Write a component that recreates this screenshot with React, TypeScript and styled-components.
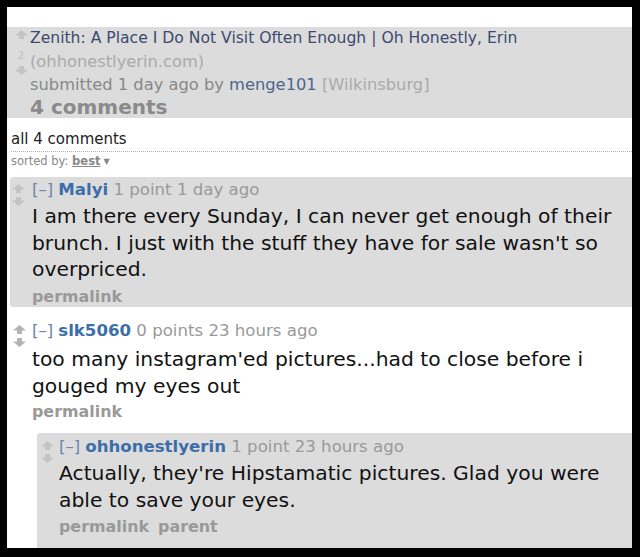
import React from "react";
import styled, { createGlobalStyle } from "styled-components";

const Global = createGlobalStyle`
  html, body { margin: 0; padding: 0; background: #000; }
  body { font-family: "DejaVu Sans", Verdana, sans-serif; }
`;

const Frame = styled.div`
  width: 625px;
  height: 541px;
  margin: 7px 0 0 7px;
  background: #fff;
  overflow: hidden;
`;

const Post = styled.div`
  margin-top: 20px;
  height: 91px;
  background: #dcdcdc;
  display: flex;
`;

const PostVote = styled.div`
  flex: 0 0 23px;
  padding: 3px 0 0 5px;
  box-sizing: border-box;
  display: flex;
  flex-direction: column;
  align-items: center;
  justify-content: flex-start;
`;

const Score = styled.div`
  font-size: 10px;
  line-height: 10px;
  height: 10px;
  color: #c0c0c0;
  margin: 12px 0 5px;
`;

const PostBody = styled.div`
  line-height: 23px;
  white-space: nowrap;
`;

const Title = styled.div`
  font-size: 15.6px;
  color: #3b4a70;
`;

const Domain = styled.div`
  font-size: 16.3px;
  color: #aaa;
`;

const Tagline = styled.div`
  font-size: 16.3px;
  color: #888;
`;

const Author = styled.span<{ $bold?: boolean }>`
  color: ${(p) => (p.$bold ? "#3d6ea8" : "#4d6690")};
  font-weight: ${(p) => (p.$bold ? "bold" : "normal")};
`;

const Muted = styled.span`
  color: #aaa;
`;

const CommentsLink = styled.div`
  color: #8a8a8a;
  font-weight: bold;
  font-size: 20px;
`;

const Menu = styled.div`
  margin: 10px 0 0 4px;
`;

const AllComments = styled.div`
  font-size: 15px;
  line-height: 22px;
  color: #222;
  padding-bottom: 1px;
  border-bottom: 1px dotted #b0b0b0;
`;

const SortedBy = styled.div`
  font-size: 11.5px;
  line-height: 14px;
  color: #888;
  margin-top: 2px;
  b {
    text-decoration: underline;
  }
`;

const Caret = styled.span`
  font-size: 8px;
  margin-left: 3px;
  vertical-align: 1px;
`;

const Comment = styled.div<{ $shaded?: boolean; $top: number; $left: number; $height?: number }>`
  margin-top: ${(p) => p.$top}px;
  margin-left: ${(p) => p.$left}px;
  background: ${(p) => (p.$shaded ? "#dcdcdc" : "transparent")};
  border-radius: 3px 0 0 3px;
  ${(p) => (p.$height ? `height: ${p.$height}px;` : "")}
  box-sizing: border-box;
`;

const CommentRow = styled.div<{ $pad: number }>`
  display: flex;
  padding-top: ${(p) => p.$pad}px;
`;

const CommentVote = styled.div<{ $left: number; $width: number }>`
  flex: 0 0 ${(p) => p.$width}px;
  padding-left: ${(p) => p.$left}px;
  box-sizing: border-box;
  display: flex;
  flex-direction: column;
  padding-top: 5px;
  gap: 4px;
`;

const CommentMain = styled.div`
  flex: 1;
  white-space: nowrap;
`;

const Header = styled.div`
  font-size: 16.6px;
  line-height: 22px;
  color: #999;
`;

const Toggle = styled.span`
  color: #6f85aa;
  margin-right: 5px;
`;

const Body = styled.div<{ $top: number }>`
  font-size: 20.3px;
  line-height: 26.5px;
  color: #111;
  margin-top: ${(p) => p.$top}px;
`;

const Buttons = styled.div<{ $top: number }>`
  font-size: 15.9px;
  line-height: 22px;
  font-weight: bold;
  color: #999;
  margin-top: ${(p) => p.$top}px;
  span + span {
    margin-left: 9px;
  }
`;

const Children = styled.div`
  margin-left: 27px;
`;

const Arrow = ({ down, color }: { down?: boolean; color: string }) => (
  <svg width="13" height="9" viewBox="0 0 13 9" style={{ display: "block" }}>
    <path
      d="M6.5 0 L13 5.5 L9 5.5 L9 9 L4 9 L4 5.5 L0 5.5 Z"
      fill={color}
      transform={down ? "rotate(180 6.5 4.5)" : undefined}
    />
  </svg>
);

type C = {
  author: string;
  score: string;
  age: string;
  body: string[];
  parent?: boolean;
};

const CommentContent = ({ c, bodyTop, btnTop }: { c: C; bodyTop: number; btnTop: number }) => (
  <CommentMain>
    <Header>
      <Toggle>[–]</Toggle>
      <Author $bold>{c.author}</Author> {c.score} {c.age}
    </Header>
    <Body $top={bodyTop}>
      {c.body.map((l, i) => (
        <div key={i}>{l}</div>
      ))}
    </Body>
    <Buttons $top={btnTop}>
      <span>permalink</span>
      {c.parent && <span>parent</span>}
    </Buttons>
  </CommentMain>
);

export default function App() {
  return (
    <>
      <Global />
      <Frame>
        <Post>
          <PostVote>
            <Arrow color="#c4c4c4" />
            <Score>2</Score>
            <Arrow down color="#c4c4c4" />
          </PostVote>
          <PostBody>
            <Title>Zenith: A Place I Do Not Visit Often Enough | Oh Honestly, Erin</Title>
            <Domain>(ohhonestlyerin.com)</Domain>
            <Tagline>
              submitted 1 day ago by <Author>menge101</Author> <Muted>[Wilkinsburg]</Muted>
            </Tagline>
            <CommentsLink>4 comments</CommentsLink>
          </PostBody>
        </Post>
        <Menu>
          <AllComments>all 4 comments</AllComments>
          <SortedBy>
            sorted by: <b>best</b>
            <Caret>▼</Caret>
          </SortedBy>
        </Menu>

        <Comment $shaded $top={8} $left={3} $height={130}>
          <CommentRow $pad={2}>
            <CommentVote $left={2} $width={22}>
              <Arrow color="#c4c4c4" />
              <Arrow down color="#c4c4c4" />
            </CommentVote>
            <CommentContent
              bodyTop={2}
              btnTop={3}
              c={{
                author: "Malyi",
                score: "1 point",
                age: "1 day ago",
                body: [
                  "I am there every Sunday, I can never get enough of their",
                  "brunch. I just with the stuff they have for sale wasn't so",
                  "overpriced.",
                ],
              }}
            />
          </CommentRow>
        </Comment>

        <Comment $top={12} $left={3}>
          <CommentRow $pad={1}>
            <CommentVote $left={3} $width={22}>
              <Arrow color="#b4b4b4" />
              <Arrow down color="#b4b4b4" />
            </CommentVote>
            <CommentContent
              bodyTop={4}
              btnTop={2}
              c={{
                author: "slk5060",
                score: "0 points",
                age: "23 hours ago",
                body: [
                  "too many instagram'ed pictures...had to close before i",
                  "gouged my eyes out",
                ],
              }}
            />
          </CommentRow>
          <Children>
            <Comment $shaded $top={10} $left={0} $height={140}>
              <CommentRow $pad={3}>
                <CommentVote $left={4} $width={22}>
                  <Arrow color="#c4c4c4" />
                  <Arrow down color="#c4c4c4" />
                </CommentVote>
                <CommentContent
                  bodyTop={2}
                  btnTop={3}
                  c={{
                    author: "ohhonestlyerin",
                    score: "1 point",
                    age: "23 hours ago",
                    body: [
                      "Actually, they're Hipstamatic pictures. Glad you were",
                      "able to save your eyes.",
                    ],
                    parent: true,
                  }}
                />
              </CommentRow>
            </Comment>
          </Children>
        </Comment>
      </Frame>
    </>
  );
}
